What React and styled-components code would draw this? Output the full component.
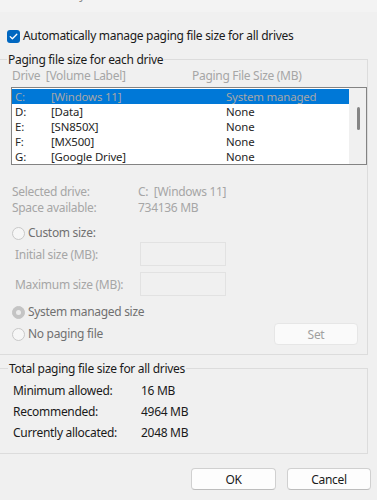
import React from "react";
import styled, { createGlobalStyle } from "styled-components";

const Global = createGlobalStyle`
  html, body { margin: 0; padding: 0; background: #f0f0f0; }
  body { font-family: "Noto Sans", "Segoe UI", sans-serif; font-size: 12px; letter-spacing: -0.3px; color: #1a1a1a; }
  * { box-sizing: border-box; }
`;

const Window = styled.div`
  width: 377px;
  height: 500px;
  overflow: hidden;
  background: #f0f0f0;
  display: flex;
  flex-direction: column;
`;

const TitleBar = styled.div`
  height: 12px;
  flex: none;
  overflow: hidden;
  background: #f3f3f3;
  display: flex;
  justify-content: space-between;
  padding: 0 6px 0 2px;
`;

const TitleText = styled.span`
  margin-top: -13px;
  line-height: 16px;
  font-size: 12px;
  color: #8a8a8a;
`;

const CloseGlyph = styled.span`
  margin-top: -11px;
  line-height: 14px;
  font-size: 14px;
  color: #9a9a9a;
`;

const CheckRow = styled.label`
  display: flex;
  align-items: center;
  gap: 3px;
  height: 16px;
  margin: 16px 0 0 7px;
  line-height: 16px;
  color: #1a1a1a;
`;

const CheckBox = styled.span`
  width: 13px;
  height: 13px;
  border-radius: 3px;
  background: #0067c0;
  display: inline-flex;
  align-items: center;
  justify-content: center;
  flex: none;
`;

const Group = styled.fieldset`
  margin: ${(p) => p.$top}px 0 0 0;
  width: 368px;
  border: 1px solid #dcdcdc;
  border-left: none;
  padding: 0 ${(p) => p.$padRight}px ${(p) => p.$padBottom}px ${(p) => p.$padLeft}px;
  min-width: 0;
`;

const Legend = styled.legend`
  padding: 0 1px;
  margin-left: ${(p) => p.$offset}px;
  line-height: 15px;
  color: #1a1a1a;
`;

const HeaderRow = styled.div`
  display: grid;
  grid-template-columns: 180px 1fr;
  padding-left: 1px;
  margin-top: 1px;
  line-height: 15px;
  color: #a6a6a6;
`;

const ListBox = styled.div`
  margin-top: 4px;
  height: 78px;
  border: 1px solid #838383;
  background: #ffffff;
  display: flex;
  padding-top: 1px;
`;

const Rows = styled.div`
  flex: 1;
  display: flex;
  flex-direction: column;
`;

const Row = styled.div`
  display: grid;
  grid-template-columns: 36px 175px 1fr;
  height: 15px;
  line-height: 15px;
  font-size: 11.4px;
  letter-spacing: -0.15px;
  padding-left: 3px;
  background: ${(p) => (p.$selected ? "#0078d7" : "transparent")};
  color: ${(p) => (p.$selected ? "#a7a7a7" : "#262626")};
  white-space: nowrap;
`;

const ScrollTrack = styled.div`
  width: 17px;
  margin-top: -1px;
  background: #f0f0f0;
  padding: 19px 0 0 8px;
`;

const Thumb = styled.div`
  width: 3px;
  height: 23px;
  border-radius: 2px;
  background: #858585;
`;

const InfoGrid = styled.div`
  display: grid;
  grid-template-columns: 126px 1fr;
  margin-top: 19px;
  padding-left: 1px;
  line-height: 16px;
  color: #a6a6a6;
`;

const RadioRow = styled.div`
  display: flex;
  align-items: center;
  gap: 3px;
  height: ${(p) => p.$h || 16}px;
  margin-top: ${(p) => p.$mt}px;
  padding-left: 1px;
  color: #707070;
  line-height: 16px;
`;

const Radio = styled.span`
  width: 13px;
  height: 13px;
  border-radius: 50%;
  flex: none;
  border: 1px solid ${(p) => (p.$checked ? "#c4c4c4" : "#c8c8c8")};
  background: ${(p) => (p.$checked ? "#c4c4c4" : "#f6f6f6")};
  display: inline-flex;
  align-items: center;
  justify-content: center;
  &::after {
    content: "";
    width: 5px;
    height: 5px;
    border-radius: 50%;
    background: ${(p) => (p.$checked ? "#ececec" : "transparent")};
  }
`;

const FieldRow = styled.div`
  display: grid;
  grid-template-columns: 125px 86px;
  align-items: center;
  margin-top: ${(p) => p.$mt}px;
  padding-left: 4px;
  color: #a6a6a6;
`;

const FieldBox = styled.div`
  height: 24px;
  border: 1px solid #e2e2e2;
  background: #f0f0f0;
`;

const Spacer = styled.div`
  flex: 1;
`;

const Button = styled.button`
  width: ${(p) => p.$w}px;
  height: 22px;
  border: 1px solid ${(p) => (p.$disabled ? "#e6e6e6" : "#d0d0d0")};
  border-bottom-color: ${(p) => (p.$disabled ? "#e6e6e6" : "#bdbdbd")};
  border-radius: 4px;
  background: ${(p) => (p.$disabled ? "#fafafa" : "#fdfdfd")};
  color: ${(p) => (p.$disabled ? "#a0a0a0" : "#1a1a1a")};
  font-family: inherit;
  font-size: 12px;
  letter-spacing: -0.3px;
  padding: 0;
  margin-right: ${(p) => p.$mr || 0}px;
`;

const TotalsGrid = styled.div`
  display: grid;
  grid-template-columns: 128px 1fr;
  grid-auto-rows: 21px;
  align-items: center;
  margin-top: 4px;
  padding-left: 4px;
  color: #1a1a1a;
`;

const Footer = styled.div`
  display: flex;
  justify-content: flex-end;
  gap: 11px;
  margin-top: 14px;
  padding-right: 6px;
`;

const drives = [
  ["C:", "[Windows 11]", "System managed"],
  ["D:", "[Data]", "None"],
  ["E:", "[SN850X]", "None"],
  ["F:", "[MX500]", "None"],
  ["G:", "[Google Drive]", "None"],
];

export default function App() {
  return (
    <>
      <Global />
      <Window>
        <TitleBar>
          <TitleText>Virtual Memory</TitleText>
          <CloseGlyph>✕</CloseGlyph>
        </TitleBar>

        <CheckRow>
          <CheckBox>
            <svg width="11" height="11" viewBox="0 0 11 11">
              <path d="M2.2 5.6 L4.4 7.8 L8.8 3.2" fill="none" stroke="#fff" strokeWidth="1.3" strokeLinecap="round" strokeLinejoin="round" />
            </svg>
          </CheckBox>
          Automatically manage paging file size for all drives
        </CheckRow>

        <Group $top={8} $padLeft={11} $padRight={0} $padBottom={9}>
          <Legend $offset={-4}>Paging file size for each drive</Legend>
          <HeaderRow>
            <span>Drive&nbsp; [Volume Label]</span>
            <span>Paging File Size (MB)</span>
          </HeaderRow>
          <ListBox>
            <Rows>
              {drives.map((d, i) => (
                <Row key={d[0]} $selected={i === 0}>
                  <span>{d[0]}</span>
                  <span>{d[1]}</span>
                  <span>{d[2]}</span>
                </Row>
              ))}
            </Rows>
            <ScrollTrack>
              <Thumb />
            </ScrollTrack>
          </ListBox>

          <InfoGrid>
            <span>Selected drive:</span>
            <span>C:&nbsp; [Windows 11]</span>
            <span>Space available:</span>
            <span>734136 MB</span>
          </InfoGrid>

          <RadioRow $mt={9}>
            <Radio />
            Custom size:
          </RadioRow>
          <FieldRow $mt={1}>
            <span>Initial size (MB):</span>
            <FieldBox />
          </FieldRow>
          <FieldRow $mt={6}>
            <span>Maximum size (MB):</span>
            <FieldBox />
          </FieldRow>
          <RadioRow $mt={8}>
            <Radio $checked />
            System managed size
          </RadioRow>
          <RadioRow $mt={3} $h={22}>
            <Radio />
            No paging file
            <Spacer />
            <Button $w={84} $mr={9} $disabled>Set</Button>
          </RadioRow>
        </Group>

        <Group $top={6} $padLeft={9} $padRight={0} $padBottom={10}>
          <Legend $offset={-1}>Total paging file size for all drives</Legend>
          <TotalsGrid>
            <span>Minimum allowed:</span>
            <span>16 MB</span>
            <span>Recommended:</span>
            <span>4964 MB</span>
            <span>Currently allocated:</span>
            <span>2048 MB</span>
          </TotalsGrid>
        </Group>

        <Footer>
          <Button $w={85}>OK</Button>
          <Button $w={84}>Cancel</Button>
        </Footer>
      </Window>
    </>
  );
}
